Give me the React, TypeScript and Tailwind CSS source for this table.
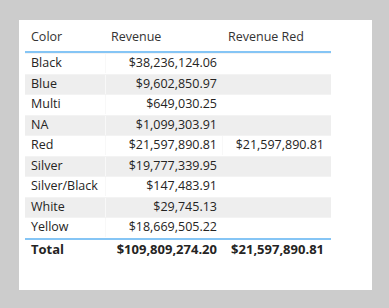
const rows: [string, string, string][] = [
  ["Black", "$38,236,124.06", ""],
  ["Blue", "$9,602,850.97", ""],
  ["Multi", "$649,030.25", ""],
  ["NA", "$1,099,303.91", ""],
  ["Red", "$21,597,890.81", "$21,597,890.81"],
  ["Silver", "$19,777,339.95", ""],
  ["Silver/Black", "$147,483.91", ""],
  ["White", "$29,745.13", ""],
  ["Yellow", "$18,669,505.22", ""],
];

export default function App() {
  return (
    <div className="w-[389px] h-[308px] bg-[#cccccc] pt-[20px] pl-[19px] font-['Open_Sans',sans-serif] text-[12.5px] text-[#252423]">
      <div className="w-[353px] h-[270px] bg-white pt-[6px] pl-[6px]">
        <div className="w-[306px]">
          <div className="flex h-[27px] border-b-2 border-[#85c5f5] text-[#333333]">
            <div className="w-[80px] pl-[6px] pt-[2px]">Color</div>
            <div className="w-[117px] pl-[6px] pt-[2px]">Revenue</div>
            <div className="w-[109px] pl-[6px] pt-[2px]">Revenue Red</div>
          </div>
          {rows.map(([c, r, rr], i) => (
            <div
              key={c}
              className={`flex h-[20.5px] items-center border-t border-[#f3f3f3] ${i % 2 === 1 ? "bg-[#eeeeee]" : "bg-white"}`}
            >
              <div className="w-[80px] pl-[6px]">{c}</div>
              <div className="w-[117px] pr-[5px] text-right border-l border-[#f8f8f8]">{r}</div>
              <div className="w-[109px] pr-[7px] text-right border-l border-[#f8f8f8]">{rr}</div>
            </div>
          ))}
          <div className="flex h-[23px] items-center border-t-2 border-[#85c5f5] font-bold text-[13px] text-[#252423]">
            <div className="w-[80px] pl-[6px]">Total</div>
            <div className="w-[117px] pr-[5px] text-right">$109,809,274.20</div>
            <div className="w-[109px] pr-[7px] text-right">$21,597,890.81</div>
          </div>
        </div>
      </div>
    </div>
  );
}
